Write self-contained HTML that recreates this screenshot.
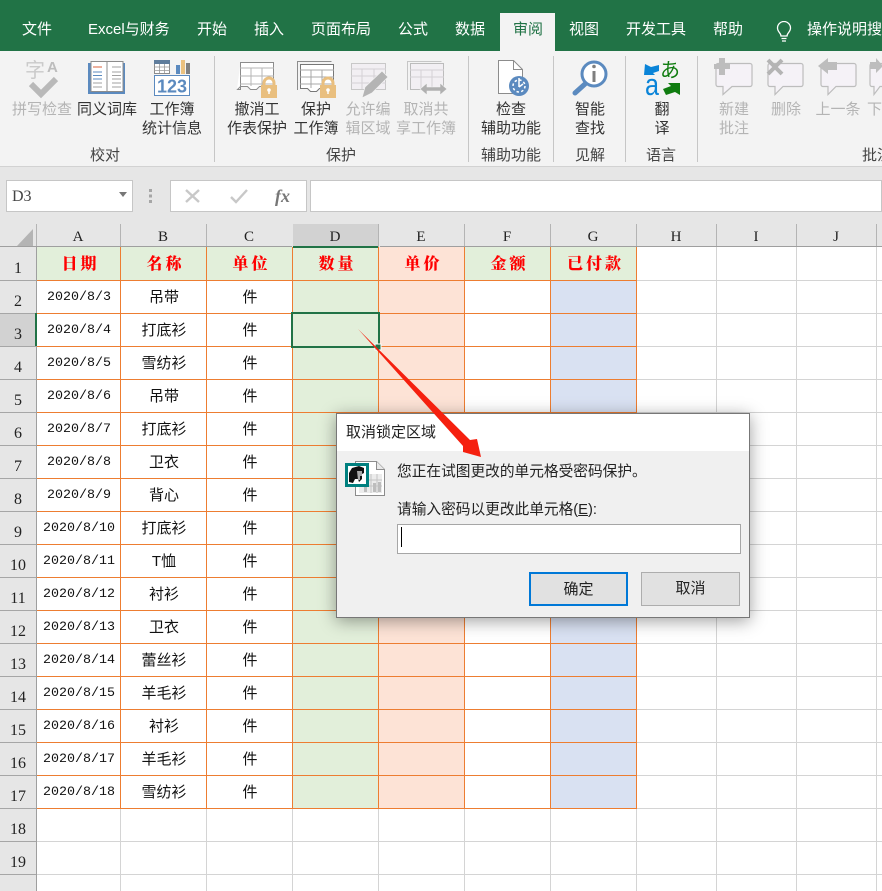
<!DOCTYPE html>
<html lang="zh"><head><meta charset="utf-8"><title>Excel</title>
<style>
*{box-sizing:border-box}
html,body{margin:0;padding:0}
body{width:882px;height:891px;overflow:hidden;position:relative;background:#fff;font-family:"Liberation Sans","Noto Sans CJK SC",sans-serif;color:#222}
.a{position:absolute}
.t{position:absolute;top:20px;height:20px;line-height:20px;font-size:15px;color:#fff;white-space:nowrap}
.l{position:absolute;width:90px;font-size:15px;line-height:19px;text-align:center;color:#333;white-space:nowrap}
.d{color:#b4b4b4}
.g{position:absolute;top:146px;width:90px;font-size:15px;line-height:19px;text-align:center;color:#444;white-space:nowrap}
.v{position:absolute;top:56px;width:1px;height:106px;background:#c6c6c6}
.r{position:absolute;left:37px;height:32px;display:flex;font-size:15px;line-height:34px;color:#111}
.r b{font-weight:400;text-align:center;display:block;width:86px}
.r b:first-child{width:84px;font-family:"Liberation Mono",monospace;font-size:13.33px}
.h{position:absolute;left:37px;top:248px;height:32px;display:flex;font:700 16px/33px "Liberation Serif","Noto Serif CJK SC",serif;color:#f00;letter-spacing:3px}
.h b{display:block;width:86px;text-align:center;padding-left:3px}
.h b:first-child{width:84px}
.n{position:absolute;left:0;width:36px;text-align:center;font:16px/20px "Liberation Serif",serif;color:#222}
.c{position:absolute;top:227px;width:20px;text-align:center;font:15px/20px "Liberation Serif",serif;color:#222}
.dlg{font-size:14.7px;color:#222;white-space:nowrap;line-height:20px}
</style></head><body>
<div class="a" style="left:0;top:0;width:882px;height:51px;background:#217346"></div>
<div class="a" style="left:500px;top:13px;width:55px;height:38px;background:#f3f3f3"></div>
<div class="t" style="left:22px">文件</div><div class="t" style="left:88px">Excel与财务</div><div class="t" style="left:197px">开始</div><div class="t" style="left:254px">插入</div><div class="t" style="left:311px">页面布局</div><div class="t" style="left:398px">公式</div><div class="t" style="left:455px">数据</div><div class="t" style="left:513px;color:#217346">审阅</div><div class="t" style="left:569px">视图</div><div class="t" style="left:626px">开发工具</div><div class="t" style="left:713px">帮助</div><div class="t" style="left:807px">操作说明搜</div>
<svg class="a" style="left:775px;top:21px" width="18" height="22" viewBox="0 0 18 22" fill="none" stroke="#fff" stroke-width="1.3"><path d="M6 15c0-3-3.500-4-3.500-8a6.500 6.500 0 0 1 13 0c0 4-3.500 5-3.500 8z"/><path d="M6.500 17.500h5M7 20h4"/></svg>

<div class="a" style="left:0;top:51px;width:882px;height:116px;background:#f3f3f3;border-bottom:1px solid #d2d2d2"></div>
<div class="a" style="left:0;top:167px;width:882px;height:57px;background:#e6e6e6"></div>
<div class="v" style="left:214px"></div><div class="v" style="left:468px"></div><div class="v" style="left:553px"></div><div class="v" style="left:625px"></div><div class="v" style="left:697px"></div>

<svg class="a" style="left:0;top:51px" width="882" height="60" viewBox="0 51 882 60">
<!-- spell -->
<text x="25" y="77" font-size="20" fill="#cacaca" font-family="Noto Sans CJK SC,sans-serif">字</text>
<text x="47" y="72" font-size="15" font-weight="700" fill="#bdbdbd" font-family="Liberation Sans,sans-serif">A</text>
<path d="M31 84l10 10 15-15" fill="none" stroke="#b9b9b9" stroke-width="6"/>
<!-- book -->
<rect x="88" y="63" width="37" height="31" fill="#5b8abf"/>
<rect x="91" y="61.500" width="32" height="30" fill="#fff" stroke="#8c8c8c"/>
<path d="M107 62v30" stroke="#8c8c8c"/>
<path d="M93 67h9" stroke="#d9603b"/><path d="M93 72h9M93 75.500h9M93 79h9" stroke="#5b8abf"/><path d="M93 83h9M93 87h9M112 67h9M112 72h9M112 75.500h9M112 79h9M112 83h9M112 87h9" stroke="#a0a0a0"/>
<!-- stats -->
<rect x="154.500" y="60.500" width="15" height="13" fill="#fff" stroke="#8c8c8c"/><rect x="154" y="60" width="16" height="4" fill="#5f7d9c"/><path d="M154 67h16M154 70.500h16M159.500 64v9M164.500 64v9" stroke="#999" stroke-width=".8"/>
<rect x="176" y="65" width="4" height="9" fill="#5b8abf"/><rect x="181" y="60" width="4" height="14" fill="#ebc17f"/><rect x="186" y="63" width="4" height="11" fill="#808080"/>
<rect x="154.500" y="75.500" width="35" height="20" fill="#fff" stroke="#5b8abf"/>
<text x="172" y="92.500" text-anchor="middle" font-size="18" font-weight="700" fill="#5b8abf" font-family="Liberation Sans,sans-serif">123</text>
<!-- protect sheet -->
<path d="M240.500 62.500h33v24h-14l-3 3h-6l-3-3h-7l-3 3h-0.500z" fill="#fff" stroke="none"/>
<path d="M240.500 89.500v-27h33v24h-14l-3 3h-6l-3-3h-7l-3 3z" fill="#fff" stroke="#8c8c8c"/>
<path d="M240 68h34M240 76h34M240 84h34M251 68v18M262 68v18" stroke="#b5b5b5"/>
<rect x="261" y="85" width="16" height="13" fill="#e9bf7f"/><path d="M264 86v-3a5 5 0 0 1 10 0v3" fill="none" stroke="#e9bf7f" stroke-width="3"/><circle cx="269" cy="90" r="1.800" fill="#fff"/><path d="M269 90v4" stroke="#fff" stroke-width="1.500"/>
<!-- protect workbook -->
<path d="M297.500 90V61.500h34" fill="none" stroke="#8c8c8c"/>
<path d="M300.500 64.500h33v24h-14l-3 3h-6l-3-3h-7z" fill="#fff" stroke="#777"/>
<path d="M300 70h34M300 77h34M300 84h34M311 70v18M322 70v18" stroke="#a8a8a8"/>
<rect x="320" y="85" width="16" height="13" fill="#e9bf7f"/><path d="M323 86v-3a5 5 0 0 1 10 0v3" fill="none" stroke="#e9bf7f" stroke-width="3"/><circle cx="328" cy="90" r="1.800" fill="#fff"/><path d="M328 90v4" stroke="#fff" stroke-width="1.500"/>
<!-- allow -->
<path d="M351.500 63.500h34v26h-34z" fill="#f2eff3" stroke="#c8c8c8"/>
<path d="M351 69h35M351 76h35M351 83h35M362 69v20M374 69v20" stroke="#d4d0d6"/>
<path d="M362 98l3-11 17-16 6 6-16 16z" fill="#b4b4b4" stroke="#f3f3f3" stroke-width=".7"/>
<!-- unshare -->
<path d="M407.500 90V61.500h34" fill="none" stroke="#c6c6c6"/>
<path d="M410.500 63.500h33v26h-33z" fill="#f2eff3" stroke="#bcbcbc"/>
<path d="M410 70h34M410 77h34M421 70v19M432 70v19" stroke="#d4d0d6"/>
<path d="M420 89l7-6v4h13v-4l7 6-7 6v-4h-13v4z" fill="#b0b0b0" stroke="#f3f3f3" stroke-width=".6"/>
<!-- access -->
<path d="M498.500 60.500h15l9 9v24h-24z" fill="#fff" stroke="#8c8c8c"/><path d="M513.500 60.500v9h9" fill="none" stroke="#8c8c8c"/>
<circle cx="519" cy="86" r="10" fill="#5b8abf"/><circle cx="519" cy="86" r="6" fill="none" stroke="#fff" stroke-width="1.500" stroke-dasharray="2.500 2.200"/><path d="M519 78v9M519 87l4-3" stroke="#fff" stroke-width="1.500"/>
<!-- lookup -->
<circle cx="594" cy="74" r="12" fill="#fff" stroke="#5b8abf" stroke-width="3"/>
<path d="M585 84l-10 9" stroke="#5b8abf" stroke-width="5" stroke-linecap="round"/>
<circle cx="594" cy="66.500" r="1.800" fill="#7f7f7f"/><rect x="592.500" y="71" width="3" height="11" fill="#7f7f7f"/>
<!-- translate -->
<path d="M645 64l6 3 8-2v6l-6 2 2 2h-11z" fill="#0a84d8"/>
<text x="660" y="77" font-size="20" fill="#107c10" font-family="Noto Sans CJK JP,sans-serif">あ</text>
<text x="645" y="95" font-size="31" textLength="14" lengthAdjust="spacingAndGlyphs" fill="#0a84d8" font-family="Liberation Sans,sans-serif">a</text>
<path d="M680 83v12l-5-3-9 3-3-6 8-3-3-3z" fill="#107c10"/>
<!-- comments -->
<g fill="#f5f2f7" stroke="#bdbdbd" stroke-width="1.200">
<path d="M718 63.500h32a2 2 0 0 1 2 2v19a2 2 0 0 1-2 2h-18l-9 8v-8h-5a2 2 0 0 1-2-2v-19a2 2 0 0 1 2-2z"/>
<path d="M770 63.500h31a2 2 0 0 1 2 2v19a2 2 0 0 1-2 2h-18l-8 8v-8h-5a2 2 0 0 1-2-2v-19a2 2 0 0 1 2-2z"/>
<path d="M823 63.500h31a2 2 0 0 1 2 2v19a2 2 0 0 1-2 2h-18l-8 8v-8h-5a2 2 0 0 1-2-2v-19a2 2 0 0 1 2-2z"/>
<path d="M875 63.500h12v23h-7l-6 8v-8h-2a2 2 0 0 1-2-2v-19a2 2 0 0 1 2-2z"/>
</g>
<path d="M714 64h5v-6h6v6h5v5h-5v6h-6v-6h-5z" fill="#bdbdbd"/>
<path d="M768 60l14 14M782 60l-14 14" stroke="#b4b4b4" stroke-width="4"/>
<path d="M818 66l10-8v4h9v8h-9v4z" fill="#bdbdbd"/>
<path d="M870 62h6v-4l7 8-7 7v-4h-6z" fill="#bdbdbd"/>
</svg>

<div class="l d" style="left:-3px;top:100px">拼写检查</div>
<div class="l" style="left:62px;top:100px">同义词库</div>
<div class="l" style="left:127px;top:100px">工作簿<br>统计信息</div>
<div class="l" style="left:212px;top:100px">撤消工<br>作表保护</div>
<div class="l" style="left:271px;top:100px">保护<br>工作簿</div>
<div class="l d" style="left:323px;top:100px">允许编<br>辑区域</div>
<div class="l d" style="left:381px;top:100px">取消共<br>享工作簿</div>
<div class="l" style="left:466px;top:100px">检查<br>辅助功能</div>
<div class="l" style="left:545px;top:100px">智能<br>查找</div>
<div class="l" style="left:617px;top:100px">翻<br>译</div>
<div class="l d" style="left:689px;top:100px">新建<br>批注</div>
<div class="l d" style="left:741px;top:100px">删除</div>
<div class="l d" style="left:793px;top:100px">上一条</div>
<div class="l d" style="left:867px;top:100px;width:20px;text-align:left">下</div>
<div class="g" style="left:60px">校对</div><div class="g" style="left:296px">保护</div><div class="g" style="left:466px">辅助功能</div><div class="g" style="left:545px">见解</div><div class="g" style="left:616px">语言</div><div class="g" style="left:862px;width:30px;text-align:left">批注</div>

<!-- formula bar -->
<div class="a" style="left:6px;top:180px;width:127px;height:32px;background:#fff;border:1px solid #c6c6c6"></div>
<div class="a" style="left:12px;top:187px;font:16px/20px 'Liberation Serif',serif;color:#444">D3</div>
<svg class="a" style="left:118px;top:192px" width="10" height="6"><path d="M1 0h8l-4 5z" fill="#777"/></svg>
<svg class="a" style="left:148px;top:188px" width="6" height="16" fill="#a6a6a6"><rect x="1" y="1" width="3" height="3"/><rect x="1" y="6.500" width="3" height="3"/><rect x="1" y="12" width="3" height="3"/></svg>
<div class="a" style="left:170px;top:180px;width:137px;height:32px;background:#fff;border:1px solid #c6c6c6"></div>
<svg class="a" style="left:184px;top:188px" width="72" height="16" fill="none" stroke="#c8c8c8" stroke-width="2.400"><path d="M2 2l13 12M15 2L2 14"/><path d="M47 9l5 5 11-12"/></svg>
<div class="a" style="left:275px;top:184px;font:italic 700 18px/24px 'Liberation Serif',serif;color:#777">fx</div>
<div class="a" style="left:310px;top:180px;width:572px;height:32px;background:#fff;border:1px solid #c6c6c6"></div>

<!-- sheet -->
<svg class="a" style="left:0;top:224px" width="882" height="667" viewBox="0 224 882 667">
<rect x="0" y="224" width="882" height="23" fill="#e6e6e6"/>
<rect x="0" y="247" width="36" height="644" fill="#e6e6e6"/>
<path d="M33 229v17H17z" fill="#b4b4b4"/>
<rect x="293" y="224" width="85" height="23" fill="#d2d2d2"/>
<rect x="0" y="313" width="36" height="33" fill="#d2d2d2"/>
<path d="M36.500 224v23M120.500 224v23M206.500 224v23M378.500 224v23M464.500 224v23M550.500 224v23M636.500 224v23M716.500 224v23M796.500 224v23M876.500 224v23" stroke="#b4b4b4"/>
<path d="M0 280.500h36M0 313.500h36M0 346.500h36M0 379.500h36M0 412.500h36M0 445.500h36M0 478.500h36M0 511.500h36M0 544.500h36M0 577.500h36M0 610.500h36M0 643.500h36M0 676.500h36M0 709.500h36M0 742.500h36M0 775.500h36M0 808.500h36M0 841.500h36M0 874.500h36" stroke="#a6a6a6"/>
<path d="M0 246.500h292M380 246.500h502M36.500 247v644" stroke="#9f9f9f"/>
<rect x="37" y="247" width="599" height="33" fill="#e2efda"/>
<rect x="379" y="247" width="85" height="33" fill="#fde3d6"/>
<rect x="293" y="280" width="85" height="528" fill="#e2efda"/>
<rect x="379" y="280" width="85" height="528" fill="#fde3d6"/>
<rect x="551" y="280" width="85" height="528" fill="#d9e1f2"/>
<path d="M37 280.500h845M37 313.500h845M37 346.500h845M37 379.500h845M37 412.500h845M37 445.500h845M37 478.500h845M37 511.500h845M37 544.500h845M37 577.500h845M37 610.500h845M37 643.500h845M37 676.500h845M37 709.500h845M37 742.500h845M37 775.500h845M37 808.500h845M37 841.500h845M37 874.500h845M120.500 808v83M206.500 808v83M292.500 808v83M378.500 808v83M464.500 808v83M550.500 808v83M636.500 247v644M716.500 247v644M796.500 247v644M876.500 247v644" stroke="#d4d4d4"/>
<path d="M37 280.500h600M37 313.500h600M37 346.500h600M37 379.500h600M37 412.500h600M37 445.500h600M37 478.500h600M37 511.500h600M37 544.500h600M37 577.500h600M37 610.500h600M37 643.500h600M37 676.500h600M37 709.500h600M37 742.500h600M37 775.500h600M37 808.500h600M120.500 247v562M206.500 247v562M292.500 247v562M378.500 247v562M464.500 247v562M550.500 247v562M636.500 247v562" stroke="#ed7d31"/>
<rect x="293" y="246" width="85" height="2" fill="#217346"/>
<rect x="35" y="313" width="2" height="33" fill="#217346"/>
<rect x="292.500" y="313.500" width="86" height="33" fill="none" stroke="#fff"/>
<rect x="292" y="313" width="87" height="34" fill="none" stroke="#217346" stroke-width="2"/>
<rect x="375" y="344" width="6" height="6" fill="#217346" stroke="#fff"/>
</svg>

<div class="c" style="left:68px">A</div><div class="c" style="left:153px">B</div><div class="c" style="left:239px">C</div><div class="c" style="left:325px">D</div><div class="c" style="left:411px">E</div><div class="c" style="left:497px">F</div><div class="c" style="left:583px">G</div><div class="c" style="left:666px">H</div><div class="c" style="left:746px">I</div><div class="c" style="left:826px">J</div>

<div class="n" style="top:259px">1</div><div class="n" style="top:292px">2</div><div class="n" style="top:325px">3</div><div class="n" style="top:358px">4</div><div class="n" style="top:391px">5</div><div class="n" style="top:424px">6</div><div class="n" style="top:457px">7</div><div class="n" style="top:490px">8</div><div class="n" style="top:523px">9</div><div class="n" style="top:556px">10</div><div class="n" style="top:589px">11</div><div class="n" style="top:622px">12</div><div class="n" style="top:655px">13</div><div class="n" style="top:688px">14</div><div class="n" style="top:721px">15</div><div class="n" style="top:754px">16</div><div class="n" style="top:787px">17</div><div class="n" style="top:820px">18</div><div class="n" style="top:853px">19</div>

<div class="h"><b>日期</b><b>名称</b><b>单位</b><b>数量</b><b>单价</b><b>金额</b><b>已付款</b></div>
<div class="r" style="top:281px"><b>2020/8/3</b><b>吊带</b><b>件</b></div>
<div class="r" style="top:314px"><b>2020/8/4</b><b>打底衫</b><b>件</b></div>
<div class="r" style="top:347px"><b>2020/8/5</b><b>雪纺衫</b><b>件</b></div>
<div class="r" style="top:380px"><b>2020/8/6</b><b>吊带</b><b>件</b></div>
<div class="r" style="top:413px"><b>2020/8/7</b><b>打底衫</b><b>件</b></div>
<div class="r" style="top:446px"><b>2020/8/8</b><b>卫衣</b><b>件</b></div>
<div class="r" style="top:479px"><b>2020/8/9</b><b>背心</b><b>件</b></div>
<div class="r" style="top:512px"><b>2020/8/10</b><b>打底衫</b><b>件</b></div>
<div class="r" style="top:545px"><b>2020/8/11</b><b>T恤</b><b>件</b></div>
<div class="r" style="top:578px"><b>2020/8/12</b><b>衬衫</b><b>件</b></div>
<div class="r" style="top:611px"><b>2020/8/13</b><b>卫衣</b><b>件</b></div>
<div class="r" style="top:644px"><b>2020/8/14</b><b>蕾丝衫</b><b>件</b></div>
<div class="r" style="top:677px"><b>2020/8/15</b><b>羊毛衫</b><b>件</b></div>
<div class="r" style="top:710px"><b>2020/8/16</b><b>衬衫</b><b>件</b></div>
<div class="r" style="top:743px"><b>2020/8/17</b><b>羊毛衫</b><b>件</b></div>
<div class="r" style="top:776px"><b>2020/8/18</b><b>雪纺衫</b><b>件</b></div>

<!-- dialog -->
<div class="a" style="left:336px;top:413px;width:414px;height:205px;background:#f0f0f0;border:1px solid #777;box-shadow:0 3px 16px rgba(0,0,0,.38)"></div>
<div class="a" style="left:337px;top:414px;width:412px;height:37px;background:#fff"></div>
<div class="a dlg" style="left:346px;top:423px;font-size:15px">取消锁定区域</div>
<svg class="a" style="left:345px;top:460px" width="42" height="38" viewBox="0 0 42 38">
<path d="M10.500 1.500h21l8 8v26h-29z" fill="#fff" stroke="#8c8c8c"/><path d="M31.500 1.500v8h8" fill="#e8e8e8" stroke="#8c8c8c"/>
<path d="M14 14h23v19H14z" fill="#ececec"/><path d="M26 14v19M32 14v19M14 20h23M14 26h23" stroke="#c4c4c4"/><path d="M28 32v-9h3v9zM33 32V22h3v10zM19 32v-5h3v5z" fill="#bdbdbd"/>
<rect x="1.500" y="4.500" width="21" height="21" fill="#fff" stroke="#00807f" stroke-width="3"/>
<path d="M4 22v-9l3-5 7-2 5 2v5l-2 1v5l-3 3-1-3h-3l-2 4z" fill="#111"/><path d="M12 11h5v5h-2v4h-2z" fill="#a8a8a8"/>
</svg>
<div class="a dlg" style="left:397px;top:462px">您正在试图更改的单元格受密码保护。</div>
<div class="a dlg" style="left:397px;top:500px">请输入密码以更改此单元格(<u>E</u>):</div>
<div class="a" style="left:397px;top:524px;width:344px;height:30px;background:#fff;border:1px solid #a6a6a6"></div>
<div class="a" style="left:401px;top:527px;width:1px;height:20px;background:#000"></div>
<div class="a dlg" style="left:529px;top:572px;width:99px;height:34px;background:#e1e1e1;border:2px solid #0078d7;text-align:center;line-height:31px;font-size:15px">确定</div>
<div class="a dlg" style="left:641px;top:572px;width:99px;height:34px;background:#e1e1e1;border:1px solid #adadad;text-align:center;line-height:32px;font-size:15px">取消</div>

<!-- arrow -->
<svg class="a" style="left:350px;top:320px" width="140" height="145" viewBox="350 320 140 145"><path d="M358 329L470 440l7-1 4 18-18-5 0-6z" fill="#f5200f"/></svg>
</body></html>
